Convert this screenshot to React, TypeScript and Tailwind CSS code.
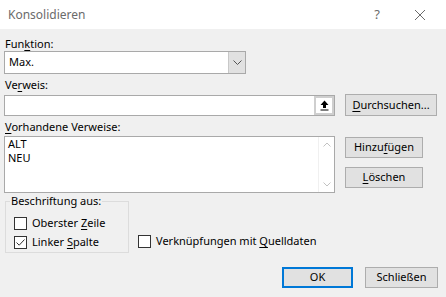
import React from "react";

const font = { fontFamily: '"Noto Sans", "Segoe UI", Arial, sans-serif' };

function U({ children }: { children: React.ReactNode }) {
  return <span className="underline underline-offset-[2px] decoration-1">{children}</span>;
}

function Btn({ children, w, primary }: { children: React.ReactNode; w: string; primary?: boolean }) {
  return (
    <div
      className={
        "flex items-center justify-center bg-[#e1e1e1] text-[11px] text-black h-[21px] " +
        w +
        (primary ? " border-2 border-[#0078d7]" : " border border-[#adadad]")
      }
    >
      {children}
    </div>
  );
}

function Check({ checked }: { checked?: boolean }) {
  return (
    <div className="w-[13px] h-[13px] border border-[#333333] bg-white flex items-center justify-center shrink-0">
      {checked && (
        <svg width="11" height="11" viewBox="0 0 11 11">
          <path d="M1.5 5.5 L4.2 8.2 L9.5 2.5" fill="none" stroke="#333" strokeWidth="1" />
        </svg>
      )}
    </div>
  );
}

export default function App() {
  return (
    <div className="w-[446px] h-[297px] bg-[#f0f0f0] flex flex-col text-black overflow-hidden" style={font}>
      {/* Title bar */}
      <div className="h-[29px] bg-white flex items-center shrink-0">
        <div className="ml-[8px] text-[12px] text-[#6b6b6b]">Konsolidieren</div>
        <div className="ml-auto text-[13px] text-[#6b6b6b] mr-[34px]">?</div>
        <svg width="12" height="12" viewBox="0 0 12 12" className="mr-[20px]">
          <path d="M1 1 L11 11 M11 1 L1 11" stroke="#6b6b6b" strokeWidth="1" />
        </svg>
      </div>

      <div className="flex flex-col pl-[4px]">
        {/* Funktion */}
        <div className="mt-[8px] h-[13px] leading-[13px] text-[11px] pl-[1px]">
          Fun<U>k</U>tion:
        </div>
        <div className="mt-[1px] w-[242px] h-[23px] border border-[#a9a9a9] bg-white flex items-stretch">
          <div className="flex-1 flex items-center pl-[4px] text-[11px]">Max.</div>
          <div className="w-[17px] bg-[#e1e1e1] border-l border-[#c8c8c8] flex items-center justify-center">
            <svg width="9" height="6" viewBox="0 0 9 6">
              <path d="M0.5 0.5 L4.5 4.5 L8.5 0.5" fill="none" stroke="#555" strokeWidth="1" />
            </svg>
          </div>
        </div>

        {/* Verweis */}
        <div className="mt-[4px] h-[14px] leading-[14px] text-[11px] pl-[1px]">
          Ve<U>r</U>weis:
        </div>
        <div className="mt-[2px] flex items-end h-[22px]">
          <div className="w-[331px] h-[21px] border border-[#a9a9a9] bg-white flex justify-end">
            <div className="w-[20px] h-full border-2 border-[#cfcfcf] bg-white flex items-center justify-center">
              <svg width="9" height="11" viewBox="0 0 9 11">
                <path d="M4.5 0.5 L8.5 5 L6 5 L6 8 L3 8 L3 5 L0.5 5 Z" fill="#000" />
                <path d="M0.5 10 L8.5 10" stroke="#000" strokeWidth="1" />
              </svg>
            </div>
          </div>
          <div className="ml-[10px] self-start">
            <Btn w="w-[92px] h-[22px]">
              <U>D</U>urchsuchen...
            </Btn>
          </div>
        </div>

        {/* Vorhandene Verweise */}
        <div className="mt-[4px] h-[14px] leading-[14px] text-[11px] pl-[1px]">
          <U>V</U>orhandene Verweise:
        </div>
        <div className="mt-[2px] flex items-start">
          <div className="w-[331px] h-[57px] border border-[#a9a9a9] bg-white flex">
            <div className="flex-1 pl-[3px] text-[11px] leading-[14px]">
              <div>ALT</div>
              <div>NEU</div>
            </div>
            <div className="w-[16px] border-l border-[#f0f0f0] flex flex-col items-center justify-between py-[5px]">
              <svg width="8" height="5" viewBox="0 0 8 5">
                <path d="M0.5 4.5 L4 1 L7.5 4.5" fill="none" stroke="#c2c2c2" strokeWidth="1" />
              </svg>
              <svg width="8" height="5" viewBox="0 0 8 5">
                <path d="M0.5 0.5 L4 4 L7.5 0.5" fill="none" stroke="#c2c2c2" strokeWidth="1" />
              </svg>
            </div>
          </div>
          <div className="ml-[10px] mt-[1px] flex flex-col gap-[9px]">
            <Btn w="w-[78px]">
              Hinzu<U>f</U>ügen
            </Btn>
            <Btn w="w-[78px]">
              <U>L</U>öschen
            </Btn>
          </div>
        </div>

        {/* Group */}
        <div className="mt-[2px] flex items-end">
          <div className="relative w-[124px] h-[52px] border border-[#dcdcdc] ml-[1px] mt-[6px] flex flex-col pl-[8px] pt-[14px] gap-[5px]">
            <div className="absolute left-[4px] top-[-8px] px-[1px] bg-[#f0f0f0] text-[11px] leading-[14px]">
              Beschriftung aus:
            </div>
            <div className="flex items-center gap-[5px] text-[11px] leading-[14px] h-[14px]">
              <Check />
              <span>
                Oberster <U>Z</U>eile
              </span>
            </div>
            <div className="flex items-center gap-[5px] text-[11px] leading-[14px] h-[14px]">
              <Check checked />
              <span>
                Linker <U>S</U>palte
              </span>
            </div>
          </div>
          <div className="ml-[9px] mb-[5px] flex items-center gap-[5px] text-[11px] leading-[14px] h-[14px]">
            <Check />
            <span>
              Verknüpfungen mit <U>Q</U>uelldaten
            </span>
          </div>
        </div>

        {/* Buttons */}
        <div className="mt-[14px] flex justify-end gap-[12px] pr-[8px]">
          <Btn w="w-[71px]" primary>
            OK
          </Btn>
          <Btn w="w-[73px]">Schließen</Btn>
        </div>
      </div>
    </div>
  );
}
